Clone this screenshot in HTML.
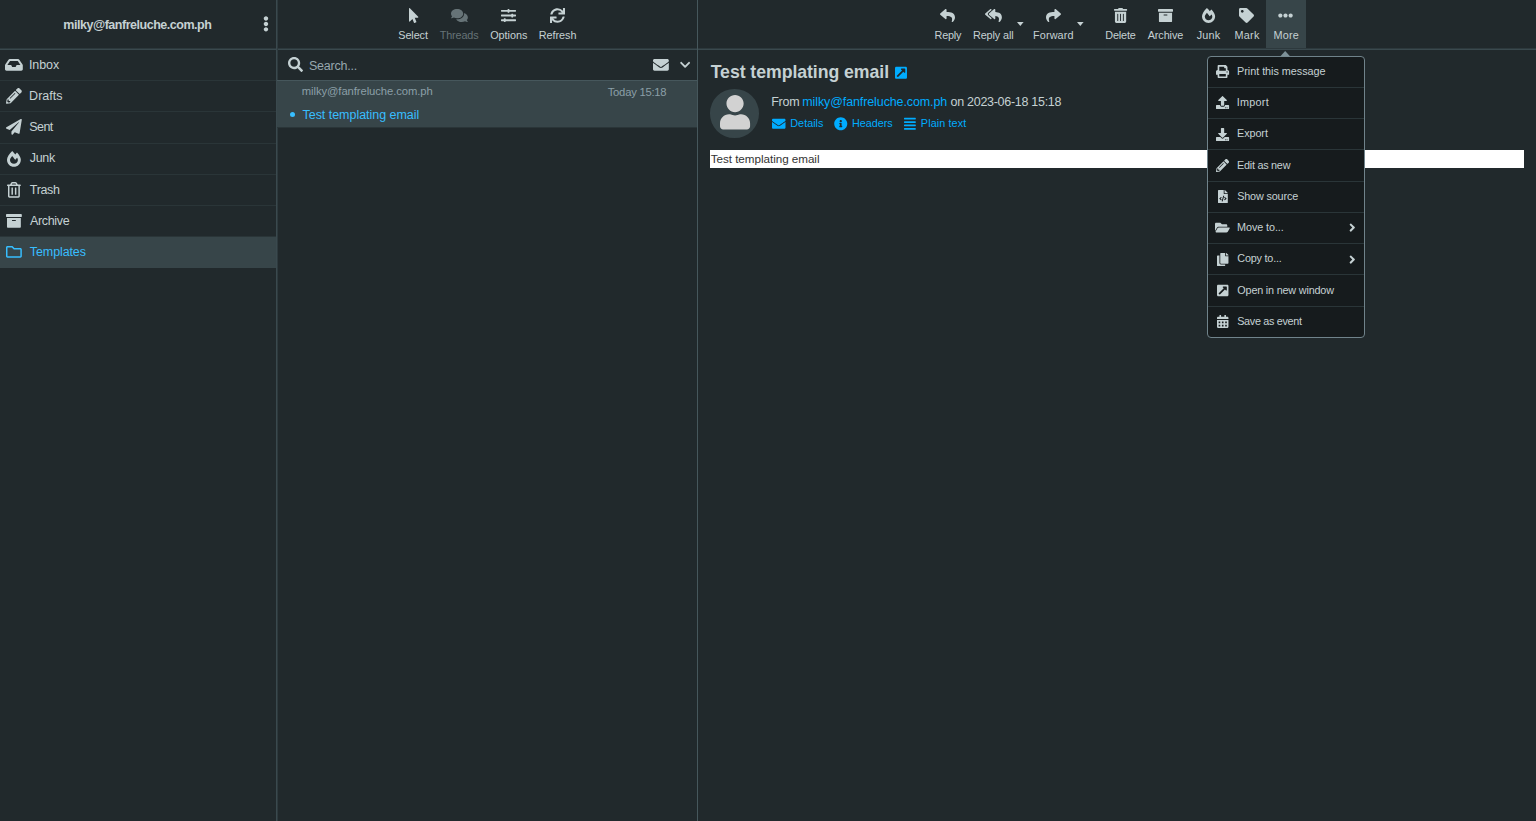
<!DOCTYPE html>
<html lang="en"><head><meta charset="utf-8"><title>Roundcube Webmail :: Test templating email</title>
<style>
html,body{margin:0;padding:0}
body{width:1536px;height:821px;overflow:hidden;position:relative;background:#21292c;color:#c5d1d3;font-family:"Liberation Sans",sans-serif}
.t{position:absolute;white-space:nowrap;line-height:1}
.i{position:absolute;display:block;overflow:visible}
.b{position:absolute}
</style></head><body>

<div class="b" style="left:0;top:237.22px;width:276px;height:31.27px;background:#374549"></div>
<div class="b" style="left:0;top:79.97px;width:276px;height:1px;background:#2a3538"></div>
<div class="b" style="left:0;top:111.24px;width:276px;height:1px;background:#2a3538"></div>
<div class="b" style="left:0;top:142.51px;width:276px;height:1px;background:#2a3538"></div>
<div class="b" style="left:0;top:173.78px;width:276px;height:1px;background:#2a3538"></div>
<div class="b" style="left:0;top:205.05px;width:276px;height:1px;background:#2a3538"></div>
<div class="b" style="left:0;top:236.32px;width:276px;height:1px;background:#2a3538"></div>
<div class="b" style="left:0;top:48px;width:1536px;height:1px;background:#2d393d"></div>
<div class="b" style="left:0;top:49px;width:1536px;height:1px;background:#3a494e"></div>
<div class="b" style="left:276px;top:0;width:1px;height:821px;background:#3a494e"></div>
<div class="b" style="left:277px;top:0;width:1px;height:821px;background:#2e3a3e"></div>
<div class="b" style="left:697px;top:0;width:1px;height:821px;background:#46575c"></div>
<div class="b" style="left:277px;top:80px;width:420px;height:1px;background:#46575c"></div>
<div class="b" style="left:277px;top:81px;width:420px;height:46px;background:#374549"></div>
<div class="b" style="left:277px;top:127px;width:420px;height:1px;background:#2a3538"></div>
<div class="b" style="left:1266px;top:0;width:40px;height:48px;background:#374549"></div>
<div class="b" style="left:710px;top:150px;width:814px;height:18px;background:#fff"></div>
<div class="b" style="left:710.1px;top:89.4px;width:48.6px;height:48.6px;border-radius:50%;background:#374549"></div>
<svg class="i" style="left:720.15px;top:95.20px;" width="30.10" height="34.40" viewBox="0 0 448 512"><path fill="#d2d2d2" d="M224 256c70.700 0 128-57.300 128-128S294.700 0 224 0 96 57.300 96 128s57.300 128 128 128zm89.600 32h-16.700c-22.200 10.200-46.900 16-72.900 16s-50.600-5.800-72.900-16h-16.700C60.200 288 0 348.200 0 422.400V464c0 26.500 21.500 48 48 48h352c26.500 0 48-21.500 48-48v-41.600c0-74.200-60.200-134.400-134.400-134.400z"/></svg>
<svg class="i" style="left:5.35px;top:56.68px;" width="17.81" height="15.83" viewBox="0 0 576 512"><path fill="#c5d1d3" d="M567.938 243.908L462.25 85.374A48.003 48.003 0 0 0 422.311 64H153.689a48 48 0 0 0-39.938 21.374L8.062 243.908A47.994 47.994 0 0 0 0 270.533V400c0 26.51 21.49 48 48 48h480c26.51 0 48-21.49 48-48V270.533a47.994 47.994 0 0 0-8.062-26.625zM162.252 128h251.497l85.333 128H376l-32 64H232l-32-64H76.918l85.334-128z"/></svg>
<svg class="i" style="left:6.33px;top:87.95px;" width="15.83" height="15.83" viewBox="0 0 512 512"><path fill="#c5d1d3" d="M497.9 142.1l-46.1 46.1c-4.7 4.7-12.3 4.7-17 0l-111-111c-4.7-4.7-4.7-12.3 0-17l46.1-46.1c18.7-18.7 49.1-18.7 67.9 0l60.1 60.1c18.8 18.7 18.8 49.1 0 67.9zM284.2 99.8L21.6 362.4.4 483.9c-2.9 16.4 11.4 30.6 27.8 27.8l121.5-21.3 262.6-262.6c4.7-4.7 4.7-12.3 0-17l-111-111c-4.8-4.7-12.4-4.7-17.1 0zM124.1 339.9c-5.5-5.5-5.5-14.3 0-19.8l154-154c5.5-5.5 14.3-5.5 19.8 0s5.5 14.3 0 19.8l-154 154c-5.5 5.5-14.3 5.5-19.8 0zM88 424h48v36.3l-64.5 11.3-31.1-31.1L51.7 376H88v48z"/></svg>
<svg class="i" style="left:6.33px;top:119.22px;" width="15.83" height="15.83" viewBox="0 0 512 512"><path fill="#c5d1d3" d="M476 3.2L12.5 270.6c-18.1 10.4-15.8 35.6 2.2 43.2L121 358.4l287.3-253.2c5.5-4.9 13.3 2.6 8.6 8.3L176 407v80.5c0 23.6 28.5 32.9 42.5 15.8L282 426l124.6 52.2c14.2 6 30.4-2.9 33-18.2l72-432C515 7.8 493.3-6.8 476 3.2z"/></svg>
<svg class="i" style="left:7.32px;top:150.50px;" width="13.85" height="15.83" viewBox="0 0 448 512"><path fill="#c5d1d3" d="M323.56 51.2c-20.8 19.3-39.58 39.59-56.22 59.97C240.08 73.62 206.28 35.53 168 0 69.74 91.17 0 209.96 0 281.6 0 408.85 100.29 512 224 512s224-103.15 224-230.4c0-53.27-51.98-163.14-124.44-230.4zm-19.47 340.65C282.43 407.01 255.72 416 226.86 416 154.71 416 96 368.26 96 290.75c0-38.61 24.31-72.63 72.79-130.75 6.93 7.98 98.83 125.34 98.83 125.34l58.63-66.88c4.14 6.85 7.91 13.55 11.27 19.97 27.35 52.19 15.81 118.97-33.43 153.42z"/></svg>
<svg class="i" style="left:7.32px;top:181.77px;" width="13.85" height="15.83" viewBox="0 0 448 512"><path fill="#c5d1d3" d="M268 416h24a12 12 0 0 0 12-12V188a12 12 0 0 0-12-12h-24a12 12 0 0 0-12 12v216a12 12 0 0 0 12 12zM432 80h-82.41l-34-56.7A48 48 0 0 0 274.41 0H173.59a48 48 0 0 0-41.16 23.3L98.41 80H16A16 16 0 0 0 0 96v16a16 16 0 0 0 16 16h16v336a48 48 0 0 0 48 48h288a48 48 0 0 0 48-48V128h16a16 16 0 0 0 16-16V96a16 16 0 0 0-16-16zM171.84 50.91A6 6 0 0 1 177 48h94a6 6 0 0 1 5.15 2.91L293.61 80H154.39zM368 464H80V128h288zm-212-48h24a12 12 0 0 0 12-12V188a12 12 0 0 0-12-12h-24a12 12 0 0 0-12 12v216a12 12 0 0 0 12 12z"/></svg>
<svg class="i" style="left:6.33px;top:213.03px;" width="15.83" height="15.83" viewBox="0 0 512 512"><path fill="#c5d1d3" d="M32 448c0 17.7 14.3 32 32 32h384c17.7 0 32-14.3 32-32V160H32v288zm160-212c0-6.6 5.4-12 12-12h104c6.600 0 12 5.400 12 12v8c0 6.600-5.400 12-12 12H204c-6.600 0-12-5.400-12-12v-8zM480 32H32C14.300 32 0 46.300 0 64v48c0 8.800 7.200 16 16 16h480c8.800 0 16-7.200 16-16V64c0-17.700-14.300-32-32-32z"/></svg>
<svg class="i" style="left:6.33px;top:244.31px;" width="15.83" height="15.83" viewBox="0 0 512 512"><path fill="#37beff" d="M464 128H272l-54.630-54.630c-6-6-14.140-9.370-22.630-9.370H48C21.490 64 0 85.490 0 112v288c0 26.510 21.490 48 48 48h416c26.510 0 48-21.490 48-48V176c0-26.510-21.490-48-48-48zm0 272H48V112h140.120l54.630 54.630c6 6 14.140 9.370 22.630 9.370H464v224z"/></svg>
<svg class="i" style="left:263.33px;top:15.89px;" width="5.94" height="15.83" viewBox="0 0 192 512"><path fill="#c5d1d3" d="M96 184c39.800 0 72 32.200 72 72s-32.200 72-72 72-72-32.200-72-72 32.200-72 72-72zM24 80c0 39.800 32.200 72 72 72s72-32.200 72-72S135.800 8 96 8 24 40.200 24 80zm0 352c0 39.800 32.200 72 72 72s72-32.200 72-72-32.200-72-72-72-72 32.200-72 72z"/></svg>
<svg class="i" style="left:408.61px;top:7.70px;" width="9.38" height="15.00" viewBox="0 0 320 512"><path fill="#c5d1d3" d="M302.189 329.126H196.105l55.831 135.993c3.889 9.428-.555 19.999-9.444 23.999l-49.165 21.427c-9.165 4-19.443-.571-23.332-9.714l-53.053-129.136-86.664 89.138C18.729 472.71 0 463.554 0 447.977V18.299C0 1.899 19.921-6.096 30.277 5.443l284.412 292.542c11.472 11.179 3.007 31.141-12.5 31.141z"/></svg>
<svg class="i" style="left:450.86px;top:7.70px;" width="16.88" height="15.00" viewBox="0 0 576 512"><path fill="#667377" d="M416 192c0-88.400-93.100-160-208-160S0 103.600 0 192c0 34.300 14.100 65.900 38 92-13.400 30.200-35.500 54.200-35.800 54.500-2.200 2.300-2.800 5.700-1.500 8.700S4.800 352 8 352c36.600 0 66.900-12.300 88.700-25 32.200 15.700 70.300 25 111.300 25 114.900 0 208-71.600 208-160zm122 220c23.900-26 38-57.700 38-92 0-66.900-53.500-124.200-129.300-148.100.9 6.600 1.300 13.300 1.300 20.100 0 105.900-107.700 192-240 192-10.800 0-21.300-.8-31.700-1.900C207.800 439.600 281.800 480 368 480c41 0 79.100-9.200 111.300-25 21.800 12.700 52.100 25 88.700 25 3.200 0 6.100-1.900 7.300-4.800 1.300-2.900.7-6.300-1.500-8.700-.3-.3-22.400-24.200-35.800-54.500z"/></svg>
<svg class="i" style="left:501.45px;top:7.70px;" width="15.00" height="15.00" viewBox="0 0 512 512"><path fill="#c5d1d3" d="M496 384H160v-16c0-8.800-7.200-16-16-16h-32c-8.800 0-16 7.200-16 16v16H16c-8.800 0-16 7.200-16 16v32c0 8.800 7.200 16 16 16h80v16c0 8.800 7.200 16 16 16h32c8.800 0 16-7.200 16-16v-16h336c8.800 0 16-7.200 16-16v-32c0-8.800-7.200-16-16-16zm0-160h-80v-16c0-8.800-7.200-16-16-16h-32c-8.800 0-16 7.200-16 16v16H16c-8.800 0-16 7.200-16 16v32c0 8.800 7.200 16 16 16h336v16c0 8.800 7.200 16 16 16h32c8.800 0 16-7.200 16-16v-16h80c8.800 0 16-7.200 16-16v-32c0-8.800-7.200-16-16-16zm0-160H288V48c0-8.800-7.200-16-16-16h-32c-8.800 0-16 7.200-16 16v16H16C7.200 64 0 71.200 0 80v32c0 8.800 7.200 16 16 16h208v16c0 8.800 7.200 16 16 16h32c8.800 0 16-7.200 16-16v-16h208c8.800 0 16-7.200 16-16V80c0-8.800-7.200-16-16-16z"/></svg>
<svg class="i" style="left:550.15px;top:7.70px;" width="15.00" height="15.00" viewBox="0 0 512 512"><path fill="#c5d1d3" d="M440.65 12.57l4 82.77A247.16 247.16 0 0 0 255.83 8C134.73 8 33.91 94.92 12.29 209.82A12 12 0 0 0 24.09 224h49.05a12 12 0 0 0 11.67-9.26 175.91 175.91 0 0 1 317-56.94l-101.46-4.86a12 12 0 0 0-12.57 12v47.41a12 12 0 0 0 12 12H500a12 12 0 0 0 12-12V12a12 12 0 0 0-12-12h-47.37a12 12 0 0 0-11.98 12.57zM255.83 432a175.61 175.61 0 0 1-146-77.8l101.8 4.870a12 12 0 0 0 12.570-12v-47.400a12 12 0 0 0-12-12H12a12 12 0 0 0-12 12V500a12 12 0 0 0 12 12h47.350a12 12 0 0 0 12-12.600l-4.150-82.570A247.170 247.170 0 0 0 255.830 504c121.110 0 221.930-86.920 243.550-201.820a12 12 0 0 0-11.800-14.180h-49.050a12 12 0 0 0-11.670 9.260A175.860 175.860 0 0 1 255.830 432z"/></svg>
<svg class="i" style="left:287.75px;top:56.95px;" width="15.00" height="15.00" viewBox="0 0 512 512"><path fill="#c5d1d3" d="M505 442.7L405.3 343c-4.5-4.5-10.6-7-17-7H372c27.600-35.300 44-79.700 44-128C416 93.100 322.900 0 208 0S0 93.100 0 208s93.100 208 208 208c48.300 0 92.700-16.400 128-44v16.300c0 6.400 2.500 12.500 7 17l99.700 99.700c9.400 9.400 24.600 9.400 33.900 0l28.300-28.300c9.400-9.400 9.400-24.600.1-34zM208 336c-70.700 0-128-57.200-128-128 0-70.700 57.200-128 128-128 70.700 0 128 57.200 128 128 0 70.700-57.200 128-128 128z"/></svg>
<svg class="i" style="left:652.88px;top:56.68px;" width="15.83" height="15.83" viewBox="0 0 512 512"><path fill="#c5d1d3" d="M502.3 190.8c3.900-3.100 9.700-.2 9.700 4.700V400c0 26.500-21.500 48-48 48H48c-26.500 0-48-21.500-48-48V195.600c0-5 5.700-7.800 9.700-4.700 22.400 17.400 52.100 39.500 154.100 113.600 21.100 15.400 56.700 47.800 92.200 47.600 35.700.3 72-32.800 92.300-47.600 102-74.100 131.600-96.300 154-113.700zM256 320c23.200.4 56.600-29.200 73.400-41.400 132.700-96.300 142.800-104.700 173.400-128.700 5.800-4.500 9.200-11.500 9.200-18.900v-19c0-26.500-21.500-48-48-48H48C21.500 64 0 85.500 0 112v19c0 7.400 3.400 14.300 9.200 18.900 30.600 23.900 40.700 32.400 173.400 128.700 16.800 12.200 50.200 41.800 73.400 41.400z"/></svg>
<svg class="i" style="left:679.88px;top:58.75px;" width="10.24" height="11.70" viewBox="0 0 448 512"><path fill="#c5d1d3" d="M207.029 381.476L12.686 187.132c-9.373-9.373-9.373-24.569 0-33.941l22.667-22.667c9.357-9.357 24.522-9.375 33.901-.04L224 284.505l154.745-154.021c9.379-9.335 24.544-9.317 33.901.04l22.667 22.667c9.373 9.373 9.373 24.569 0 33.941L240.971 381.476c-9.373 9.372-24.569 9.372-33.942 0z"/></svg>
<div class="b" style="left:289.6px;top:112.1px;width:5px;height:5px;border-radius:50%;background:#37beff"></div>
<svg class="i" style="left:940.45px;top:7.70px;" width="15.00" height="15.00" viewBox="0 0 512 512"><path fill="#c5d1d3" d="M8.309 189.836L184.313 37.851C199.719 24.546 224 35.347 224 56.015v80.053c160.629 1.839 288 34.032 288 186.258 0 61.441-39.581 122.309-83.333 154.132-13.653 9.931-33.111-2.533-28.077-18.631 45.344-145.012-21.507-183.51-176.59-185.742V360c0 20.7-24.3 31.453-39.687 18.164l-176.004-152c-11.071-9.562-11.086-26.753 0-36.328z"/></svg>
<svg class="i" style="left:984.76px;top:7.70px;" width="16.88" height="15.00" viewBox="0 0 576 512"><path fill="#c5d1d3" d="M136.309 189.836L312.313 37.851C327.72 24.546 352 35.348 352 56.015v82.763c129.182 10.231 224 52.212 224 183.548 0 61.441-39.582 122.309-83.333 154.132-13.653 9.931-33.111-2.533-28.077-18.631 38.512-123.162-3.922-169.482-112.59-182.015v84.175c0 20.701-24.3 31.453-39.687 18.164L136.309 226.164c-11.071-9.561-11.086-26.753 0-36.328zm-128 36.328L184.313 378.15C199.7 391.439 224 380.687 224 359.986v-15.818l-108.606-93.785A55.96 55.96 0 0 1 96 207.998a55.953 55.953 0 0 1 19.393-42.38L224 71.832V56.015c0-20.667-24.28-31.469-39.687-18.164L8.309 189.836c-11.086 9.575-11.071 26.767 0 36.328z"/></svg>
<svg class="i" style="left:1045.55px;top:7.70px;" width="15.00" height="15.00" viewBox="0 0 512 512"><path fill="#c5d1d3" d="M503.691 189.836L327.687 37.851C312.281 24.546 288 35.347 288 56.015v80.053C127.371 137.907 0 170.1 0 322.326c0 61.441 39.581 122.309 83.333 154.132 13.653 9.931 33.111-2.533 28.077-18.631C66.066 312.814 132.917 274.316 288 272.085V360c0 20.7 24.3 31.453 39.687 18.164l176.004-152c11.071-9.562 11.086-26.753 0-36.328z"/></svg>
<svg class="i" style="left:1114.04px;top:7.70px;" width="13.12" height="15.00" viewBox="0 0 448 512"><path fill="#c5d1d3" d="M32 464a48 48 0 0 0 48 48h288a48 48 0 0 0 48-48V128H32zm272-256a16 16 0 0 1 32 0v224a16 16 0 0 1-32 0zm-96 0a16 16 0 0 1 32 0v224a16 16 0 0 1-32 0zm-96 0a16 16 0 0 1 32 0v224a16 16 0 0 1-32 0zM432 32H312l-9.4-18.7A24 24 0 0 0 281.1 0H166.8a23.72 23.72 0 0 0-21.4 13.3L136 32H16A16 16 0 0 0 0 48v32a16 16 0 0 0 16 16h416a16 16 0 0 0 16-16V48a16 16 0 0 0-16-16z"/></svg>
<svg class="i" style="left:1157.60px;top:7.70px;" width="15.00" height="15.00" viewBox="0 0 512 512"><path fill="#c5d1d3" d="M32 448c0 17.7 14.3 32 32 32h384c17.7 0 32-14.3 32-32V160H32v288zm160-212c0-6.6 5.4-12 12-12h104c6.600 0 12 5.400 12 12v8c0 6.600-5.400 12-12 12H204c-6.600 0-12-5.400-12-12v-8zM480 32H32C14.300 32 0 46.300 0 64v48c0 8.800 7.200 16 16 16h480c8.800 0 16-7.200 16-16V64c0-17.700-14.300-32-32-32z"/></svg>
<svg class="i" style="left:1201.54px;top:7.70px;" width="13.12" height="15.00" viewBox="0 0 448 512"><path fill="#c5d1d3" d="M323.56 51.2c-20.8 19.3-39.58 39.59-56.22 59.97C240.08 73.62 206.28 35.53 168 0 69.74 91.17 0 209.96 0 281.6 0 408.85 100.29 512 224 512s224-103.15 224-230.4c0-53.27-51.98-163.14-124.44-230.4zm-19.47 340.65C282.43 407.01 255.72 416 226.86 416 154.71 416 96 368.26 96 290.75c0-38.61 24.31-72.63 72.79-130.75 6.93 7.98 98.83 125.34 98.83 125.34l58.63-66.88c4.14 6.85 7.91 13.55 11.27 19.97 27.35 52.19 15.81 118.97-33.43 153.42z"/></svg>
<svg class="i" style="left:1239.40px;top:7.70px;" width="15.00" height="15.00" viewBox="0 0 512 512"><path fill="#c5d1d3" d="M0 252.118V48C0 21.49 21.49 0 48 0h204.118a48 48 0 0 1 33.941 14.059l211.882 211.882c18.745 18.745 18.745 49.137 0 67.882L293.823 497.941c-18.745 18.745-49.137 18.745-67.882 0L14.059 286.059A48 48 0 0 1 0 252.118zM112 64c-26.51 0-48 21.49-48 48s21.49 48 48 48 48-21.49 48-48-21.49-48-48-48z"/></svg>
<svg class="i" style="left:1278.40px;top:7.70px;" width="15.00" height="15.00" viewBox="0 0 512 512"><path fill="#c5d1d3" d="M328 256c0 39.800-32.200 72-72 72s-72-32.200-72-72 32.200-72 72-72 72 32.200 72 72zm104-72c-39.800 0-72 32.200-72 72s32.200 72 72 72 72-32.200 72-72-32.200-72-72-72zm-352 0c-39.800 0-72 32.200-72 72s32.200 72 72 72 72-32.200 72-72-32.200-72-72-72z"/></svg>
<svg class="i" style="left:1017.2px;top:22px" width="6.6" height="4" viewBox="0 0 66 40"><path fill="#c5d1d3" d="M0 0H66L33 40z"/></svg>
<svg class="i" style="left:1077.4px;top:22px" width="6.6" height="4" viewBox="0 0 66 40"><path fill="#c5d1d3" d="M0 0H66L33 40z"/></svg>
<svg class="i" style="left:895.21px;top:66.05px;" width="11.99" height="13.70" viewBox="0 0 448 512"><path fill="#00acff" d="M448 80v352c0 26.510-21.490 48-48 48H48c-26.510 0-48-21.490-48-48V80c0-26.510 21.490-48 48-48h352c26.510 0 48 21.490 48 48zm-88 16H248.029c-21.313 0-32.080 25.861-16.971 40.971l31.984 31.987L67.515 364.485c-4.686 4.686-4.686 12.284 0 16.971l31.029 31.029c4.687 4.686 12.285 4.686 16.971 0l195.526-195.526 31.988 31.991C358.058 263.977 384 253.425 384 231.979V120c0-13.255-10.745-24-24-24z"/></svg>
<svg class="i" style="left:772.25px;top:117.45px;" width="13.50" height="13.50" viewBox="0 0 512 512"><path fill="#00acff" d="M502.3 190.8c3.900-3.100 9.700-.2 9.700 4.700V400c0 26.500-21.500 48-48 48H48c-26.500 0-48-21.500-48-48V195.600c0-5 5.700-7.800 9.700-4.700 22.400 17.400 52.100 39.500 154.100 113.600 21.100 15.400 56.700 47.800 92.200 47.600 35.700.3 72-32.800 92.300-47.600 102-74.100 131.600-96.300 154-113.700zM256 320c23.200.4 56.600-29.200 73.400-41.400 132.700-96.300 142.800-104.700 173.400-128.700 5.800-4.500 9.200-11.500 9.200-18.900v-19c0-26.500-21.500-48-48-48H48C21.500 64 0 85.500 0 112v19c0 7.400 3.400 14.300 9.200 18.900 30.600 23.900 40.700 32.400 173.400 128.700 16.800 12.200 50.200 41.800 73.400 41.400z"/></svg>
<svg class="i" style="left:833.90px;top:117.25px;" width="13.50" height="13.50" viewBox="0 0 512 512"><path fill="#00acff" d="M256 8C119.043 8 8 119.083 8 256c0 136.997 111.043 248 248 248s248-111.003 248-248C504 119.083 392.957 8 256 8zm0 110c23.196 0 42 18.804 42 42s-18.804 42-42 42-42-18.804-42-42 18.804-42 42-42zm56 254c0 6.627-5.373 12-12 12h-88c-6.627 0-12-5.373-12-12v-24c0-6.627 5.373-12 12-12h12v-64h-12c-6.627 0-12-5.373-12-12v-24c0-6.627 5.373-12 12-12h64c6.627 0 12 5.373 12 12v100h12c6.627 0 12 5.373 12 12v24z"/></svg>
<svg class="i" style="left:904.19px;top:117.45px;" width="11.81" height="13.50" viewBox="0 0 448 512"><path fill="#00acff" d="M432 416H16a16 16 0 0 0-16 16v32a16 16 0 0 0 16 16h416a16 16 0 0 0 16-16v-32a16 16 0 0 0-16-16zm0-128H16a16 16 0 0 0-16 16v32a16 16 0 0 0 16 16h416a16 16 0 0 0 16-16v-32a16 16 0 0 0-16-16zm0-128H16a16 16 0 0 0-16 16v32a16 16 0 0 0 16 16h416a16 16 0 0 0 16-16v-32a16 16 0 0 0-16-16zm0-128H16A16 16 0 0 0 0 48v32a16 16 0 0 0 16 16h416a16 16 0 0 0 16-16V48a16 16 0 0 0-16-16z"/></svg>
<div class="b" style="left:1207px;top:56px;width:156px;height:280px;background:#161b1d;border:1px solid #70838b;border-radius:4px"></div>
<svg class="i" style="left:1280.4px;top:50.6px" width="10.4" height="5.6" viewBox="0 0 104 58"><path fill="#7d9198" d="M0 58L52 0L104 58z"/></svg>
<div class="b" style="left:1208px;top:86.86px;width:156px;height:1px;background:#2a3538"></div>
<div class="b" style="left:1208px;top:118.12px;width:156px;height:1px;background:#2a3538"></div>
<div class="b" style="left:1208px;top:149.38px;width:156px;height:1px;background:#2a3538"></div>
<div class="b" style="left:1208px;top:180.64px;width:156px;height:1px;background:#2a3538"></div>
<div class="b" style="left:1208px;top:211.90px;width:156px;height:1px;background:#2a3538"></div>
<div class="b" style="left:1208px;top:243.16px;width:156px;height:1px;background:#2a3538"></div>
<div class="b" style="left:1208px;top:274.42px;width:156px;height:1px;background:#2a3538"></div>
<div class="b" style="left:1208px;top:305.68px;width:156px;height:1px;background:#2a3538"></div>
<svg class="i" style="left:1216.25px;top:65.05px;" width="13.10" height="13.10" viewBox="0 0 512 512"><path fill="#c5d1d3" d="M448 192V77.250c0-8.490-3.370-16.620-9.370-22.630L393.370 9.370c-6-6-14.140-9.370-22.630-9.370H96C78.330 0 64 14.330 64 32v160c-35.350 0-64 28.650-64 64v112c0 8.840 7.160 16 16 16h48v96c0 17.670 14.330 32 32 32h320c17.670 0 32-14.330 32-32v-96h48c8.840 0 16-7.160 16-16V256c0-35.350-28.650-64-64-64zm-64 256H128v-96h256v96zm0-224H128V64h192v48c0 8.840 7.160 16 16 16h48v96zm48 72c-13.250 0-24-10.750-24-24 0-13.260 10.750-24 24-24s24 10.740 24 24c0 13.250-10.750 24-24 24z"/></svg>
<svg class="i" style="left:1216.25px;top:96.31px;" width="13.10" height="13.10" viewBox="0 0 512 512"><path fill="#c5d1d3" d="M296 384h-80c-13.300 0-24-10.700-24-24V192h-87.700c-17.800 0-26.700-21.500-14.100-34.100L242.300 5.700c7.500-7.500 19.800-7.500 27.300 0l152.200 152.200c12.600 12.600 3.700 34.100-14.100 34.100H320v168c0 13.300-10.700 24-24 24zm216-8v112c0 13.300-10.700 24-24 24H24c-13.300 0-24-10.700-24-24V376c0-13.300 10.700-24 24-24h136v8c0 30.900 25.100 56 56 56h80c30.900 0 56-25.100 56-56v-8h136c13.300 0 24 10.700 24 24zm-124 88c0-11-9-20-20-20s-20 9-20 20 9 20 20 20 20-9 20-20zm64 0c0-11-9-20-20-20s-20 9-20 20 9 20 20 20 20-9 20-20z"/></svg>
<svg class="i" style="left:1216.25px;top:127.57px;" width="13.10" height="13.10" viewBox="0 0 512 512"><path fill="#c5d1d3" d="M216 0h80c13.300 0 24 10.700 24 24v168h87.700c17.800 0 26.700 21.500 14.100 34.100L269.700 378.300c-7.500 7.500-19.800 7.500-27.300 0L90.100 226.100c-12.600-12.600-3.700-34.100 14.100-34.100H192V24c0-13.300 10.700-24 24-24zm296 376v112c0 13.300-10.700 24-24 24H24c-13.300 0-24-10.700-24-24V376c0-13.300 10.700-24 24-24h146.700l49 49c20.100 20.100 52.500 20.100 72.600 0l49-49H488c13.300 0 24 10.700 24 24zm-124 88c0-11-9-20-20-20s-20 9-20 20 9 20 20 20 20-9 20-20zm64 0c0-11-9-20-20-20s-20 9-20 20 9 20 20 20 20-9 20-20z"/></svg>
<svg class="i" style="left:1216.25px;top:158.83px;" width="13.10" height="13.10" viewBox="0 0 512 512"><path fill="#c5d1d3" d="M497.9 142.1l-46.1 46.1c-4.7 4.7-12.3 4.7-17 0l-111-111c-4.7-4.7-4.7-12.3 0-17l46.1-46.1c18.7-18.7 49.1-18.7 67.9 0l60.1 60.1c18.8 18.7 18.8 49.1 0 67.9zM284.2 99.8L21.6 362.4.4 483.9c-2.9 16.4 11.4 30.6 27.8 27.8l121.5-21.3 262.6-262.6c4.7-4.7 4.7-12.3 0-17l-111-111c-4.8-4.7-12.4-4.7-17.1 0zM124.1 339.9c-5.5-5.5-5.5-14.3 0-19.8l154-154c5.5-5.5 14.3-5.5 19.8 0s5.5 14.3 0 19.8l-154 154c-5.5 5.5-14.3 5.5-19.8 0zM88 424h48v36.3l-64.5 11.3-31.1-31.1L51.7 376H88v48z"/></svg>
<svg class="i" style="left:1217.89px;top:190.09px;" width="9.82" height="13.10" viewBox="0 0 384 512"><path fill="#c5d1d3" d="M384 121.941V128H256V0h6.059c6.365 0 12.47 2.529 16.971 7.029l97.941 97.941A24.005 24.005 0 0 1 384 121.941zM248 160c-13.2 0-24-10.800-24-24V0H24C10.745 0 0 10.745 0 24v464c0 13.255 10.745 24 24 24h336c13.255 0 24-10.745 24-24V160H248zM123.206 400.505a5.400 5.400 0 0 1-7.633.246l-64.866-60.812a5.400 5.400 0 0 1 0-7.879l64.866-60.812a5.400 5.400 0 0 1 7.633.246l19.579 20.885a5.400 5.400 0 0 1-.372 7.747L101.650 336l40.763 35.874a5.400 5.400 0 0 1 .372 7.747l-19.579 20.884zm51.295 50.479l-27.453-7.970a5.402 5.402 0 0 1-3.681-6.692l61.440-211.626a5.402 5.402 0 0 1 6.692-3.681l27.452 7.970a5.400 5.400 0 0 1 3.680 6.692l-61.440 211.626a5.397 5.397 0 0 1-6.690 3.681zm160.792-111.045l-64.866 60.812a5.400 5.400 0 0 1-7.633-.246l-19.580-20.885a5.400 5.400 0 0 1 .372-7.747L284.350 336l-40.763-35.874a5.400 5.400 0 0 1-.372-7.747l19.580-20.885a5.400 5.400 0 0 1 7.633-.246l64.866 60.812a5.400 5.400 0 0 1-.001 7.879z"/></svg>
<svg class="i" style="left:1215.43px;top:221.35px;" width="14.74" height="13.10" viewBox="0 0 576 512"><path fill="#c5d1d3" d="M572.694 292.093L500.27 416.248A63.997 63.997 0 0 1 444.989 448H45.025c-18.523 0-30.064-20.093-20.731-36.093l72.424-124.155A64 64 0 0 1 152 256h399.964c18.523 0 30.064 20.093 20.73 36.093zM152 224h328v-48c0-26.510-21.490-48-48-48H272l-64-64H48C21.490 64 0 85.490 0 112v278.046l69.077-118.418C86.214 242.250 117.989 224 152 224z"/></svg>
<svg class="i" style="left:1217.07px;top:252.61px;" width="11.46" height="13.10" viewBox="0 0 448 512"><path fill="#c5d1d3" d="M320 448v40c0 13.255-10.745 24-24 24H24c-13.255 0-24-10.745-24-24V120c0-13.255 10.745-24 24-24h72v296c0 30.879 25.121 56 56 56h168zm0-344V0H152c-13.255 0-24 10.745-24 24v368c0 13.255 10.745 24 24 24h272c13.255 0 24-10.745 24-24V128H344c-13.200 0-24-10.800-24-24zm120.971-31.029L375.029 7.029A24 24 0 0 0 358.059 0H352v96h96v-6.059a24 24 0 0 0-7.029-16.970z"/></svg>
<svg class="i" style="left:1217.07px;top:283.87px;" width="11.46" height="13.10" viewBox="0 0 448 512"><path fill="#c5d1d3" d="M448 80v352c0 26.510-21.490 48-48 48H48c-26.510 0-48-21.490-48-48V80c0-26.510 21.490-48 48-48h352c26.510 0 48 21.490 48 48zm-88 16H248.029c-21.313 0-32.080 25.861-16.971 40.971l31.984 31.987L67.515 364.485c-4.686 4.686-4.686 12.284 0 16.971l31.029 31.029c4.687 4.686 12.285 4.686 16.971 0l195.526-195.526 31.988 31.991C358.058 263.977 384 253.425 384 231.979V120c0-13.255-10.745-24-24-24z"/></svg>
<svg class="i" style="left:1217.07px;top:315.13px;" width="11.46" height="13.10" viewBox="0 0 448 512"><path fill="#c5d1d3" d="M0 464c0 26.500 21.500 48 48 48h352c26.500 0 48-21.500 48-48V192H0v272zm320-196c0-6.600 5.400-12 12-12h40c6.600 0 12 5.400 12 12v40c0 6.600-5.400 12-12 12h-40c-6.600 0-12-5.400-12-12v-40zm0 128c0-6.600 5.400-12 12-12h40c6.600 0 12 5.400 12 12v40c0 6.600-5.400 12-12 12h-40c-6.600 0-12-5.400-12-12v-40zM192 268c0-6.600 5.400-12 12-12h40c6.600 0 12 5.400 12 12v40c0 6.600-5.400 12-12 12h-40c-6.600 0-12-5.400-12-12v-40zm0 128c0-6.600 5.400-12 12-12h40c6.600 0 12 5.400 12 12v40c0 6.600-5.400 12-12 12h-40c-6.600 0-12-5.400-12-12v-40zM64 268c0-6.600 5.400-12 12-12h40c6.600 0 12 5.400 12 12v40c0 6.600-5.400 12-12 12H76c-6.600 0-12-5.400-12-12v-40zm0 128c0-6.600 5.400-12 12-12h40c6.600 0 12 5.400 12 12v40c0 6.600-5.400 12-12 12H76c-6.600 0-12-5.400-12-12v-40zM400 64h-48V16c0-8.800-7.200-16-16-16h-32c-8.800 0-16 7.200-16 16v48H160V16c0-8.800-7.200-16-16-16h-32c-8.800 0-16 7.200-16 16v48H48C21.500 64 0 85.500 0 112v48h448v-48c0-26.500-21.500-48-48-48z"/></svg>
<svg class="i" style="left:1348.82px;top:221.25px;" width="6.55" height="13.10" viewBox="0 0 256 512"><path fill="#c5d1d3" d="M224.3 273l-136 136c-9.400 9.400-24.600 9.400-33.900 0l-22.600-22.600c-9.400-9.400-9.400-24.600 0-33.900l96.400-96.400-96.400-96.400c-9.400-9.400-9.400-24.600 0-33.900L54.300 103c9.400-9.400 24.600-9.400 33.900 0l136 136c9.500 9.400 9.500 24.600.1 34z"/></svg>
<svg class="i" style="left:1348.82px;top:252.51px;" width="6.55" height="13.10" viewBox="0 0 256 512"><path fill="#c5d1d3" d="M224.3 273l-136 136c-9.400 9.400-24.600 9.400-33.900 0l-22.600-22.600c-9.400-9.400-9.400-24.600 0-33.900l96.400-96.400-96.400-96.400c-9.400-9.400-9.400-24.600 0-33.900L54.300 103c9.400-9.400 24.600-9.400 33.900 0l136 136c9.500 9.400 9.500 24.600.1 34z"/></svg>
<span class="t" style="left:63.34px;top:19.20px;font-size:12.5px;font-weight:700;color:#c5d1d3;letter-spacing:-0.472px;">milky@fanfreluche.com.ph</span>
<span class="t" style="left:28.96px;top:58.60px;font-size:12.5px;font-weight:400;color:#c5d1d3;letter-spacing:-0.097px;">Inbox</span>
<span class="t" style="left:29.08px;top:89.87px;font-size:12.5px;font-weight:400;color:#c5d1d3;letter-spacing:0.026px;">Drafts</span>
<span class="t" style="left:29.30px;top:121.14px;font-size:12.5px;font-weight:400;color:#c5d1d3;letter-spacing:-0.571px;">Sent</span>
<span class="t" style="left:29.78px;top:152.41px;font-size:12.5px;font-weight:400;color:#c5d1d3;letter-spacing:-0.298px;">Junk</span>
<span class="t" style="left:29.85px;top:183.68px;font-size:12.5px;font-weight:400;color:#c5d1d3;letter-spacing:-0.343px;">Trash</span>
<span class="t" style="left:29.94px;top:214.95px;font-size:12.5px;font-weight:400;color:#c5d1d3;letter-spacing:-0.333px;">Archive</span>
<span class="t" style="left:29.85px;top:246.22px;font-size:12.5px;font-weight:400;color:#37beff;letter-spacing:-0.110px;">Templates</span>
<span class="t" style="left:398.26px;top:29.70px;font-size:10.83px;font-weight:400;color:#c5d1d3;letter-spacing:-0.077px;">Select</span>
<span class="t" style="left:439.68px;top:29.70px;font-size:10.83px;font-weight:400;color:#667377;letter-spacing:-0.127px;">Threads</span>
<span class="t" style="left:490.19px;top:29.70px;font-size:10.83px;font-weight:400;color:#c5d1d3;letter-spacing:-0.033px;">Options</span>
<span class="t" style="left:538.82px;top:29.70px;font-size:10.83px;font-weight:400;color:#c5d1d3;letter-spacing:-0.054px;">Refresh</span>
<span class="t" style="left:308.91px;top:59.50px;font-size:12.5px;font-weight:400;color:#97a7ad;letter-spacing:-0.216px;">Search...</span>
<span class="t" style="left:301.78px;top:86.30px;font-size:11.25px;font-weight:400;color:#8b9fa7;letter-spacing:-0.079px;">milky@fanfreluche.com.ph</span>
<span class="t" style="left:607.72px;top:86.80px;font-size:11.25px;font-weight:400;color:#8b9fa7;letter-spacing:-0.243px;">Today 15:18</span>
<span class="t" style="left:302.51px;top:108.50px;font-size:12.5px;font-weight:400;color:#37beff;letter-spacing:-0.033px;">Test templating email</span>
<span class="t" style="left:934.52px;top:29.70px;font-size:10.83px;font-weight:400;color:#c5d1d3;letter-spacing:-0.204px;">Reply</span>
<span class="t" style="left:972.94px;top:29.70px;font-size:10.83px;font-weight:400;color:#c5d1d3;letter-spacing:-0.097px;">Reply all</span>
<span class="t" style="left:1033.12px;top:29.70px;font-size:10.83px;font-weight:400;color:#c5d1d3;letter-spacing:0.104px;">Forward</span>
<span class="t" style="left:1105.26px;top:29.70px;font-size:10.83px;font-weight:400;color:#c5d1d3;letter-spacing:-0.135px;">Delete</span>
<span class="t" style="left:1147.72px;top:29.70px;font-size:10.83px;font-weight:400;color:#c5d1d3;letter-spacing:-0.093px;">Archive</span>
<span class="t" style="left:1196.67px;top:29.70px;font-size:10.83px;font-weight:400;color:#c5d1d3;letter-spacing:0.217px;">Junk</span>
<span class="t" style="left:1234.49px;top:29.70px;font-size:10.83px;font-weight:400;color:#c5d1d3;letter-spacing:0.291px;">Mark</span>
<span class="t" style="left:1273.46px;top:29.70px;font-size:10.83px;font-weight:400;color:#c5d1d3;letter-spacing:0.216px;">More</span>
<span class="t" style="left:710.68px;top:64.20px;font-size:17.7px;font-weight:700;color:#c5d1d3;letter-spacing:-0.058px;">Test templating email</span>
<span class="t" style="left:771.18px;top:95.70px;font-size:12.5px;font-weight:400;color:#c5d1d3;letter-spacing:-0.260px;">From</span>
<span class="t" style="left:802.29px;top:95.70px;font-size:12.5px;font-weight:400;color:#00acff;letter-spacing:-0.107px;">milky@fanfreluche.com.ph</span>
<span class="t" style="left:950.59px;top:95.70px;font-size:12.5px;font-weight:400;color:#c5d1d3;letter-spacing:-0.289px;">on 2023-06-18 15:18</span>
<span class="t" style="left:790.30px;top:117.50px;font-size:10.83px;font-weight:400;color:#00acff;letter-spacing:0.007px;">Details</span>
<span class="t" style="left:852.02px;top:117.50px;font-size:10.83px;font-weight:400;color:#00acff;letter-spacing:-0.053px;">Headers</span>
<span class="t" style="left:920.82px;top:117.50px;font-size:10.83px;font-weight:400;color:#00acff;letter-spacing:0.102px;">Plain text</span>
<span class="t" style="left:710.76px;top:152.50px;font-size:11.67px;font-weight:400;color:#333333;letter-spacing:-0.038px;">Test templating email</span>
<span class="t" style="left:1237.02px;top:65.80px;font-size:10.83px;font-weight:400;color:#c5d1d3;letter-spacing:-0.027px;">Print this message</span>
<span class="t" style="left:1236.82px;top:97.06px;font-size:10.83px;font-weight:400;color:#c5d1d3;letter-spacing:0.229px;">Import</span>
<span class="t" style="left:1237.07px;top:128.32px;font-size:10.83px;font-weight:400;color:#c5d1d3;letter-spacing:-0.093px;">Export</span>
<span class="t" style="left:1237.02px;top:159.58px;font-size:10.83px;font-weight:400;color:#c5d1d3;letter-spacing:-0.253px;">Edit as new</span>
<span class="t" style="left:1237.14px;top:190.84px;font-size:10.83px;font-weight:400;color:#c5d1d3;letter-spacing:-0.155px;">Show source</span>
<span class="t" style="left:1237.04px;top:222.10px;font-size:10.83px;font-weight:400;color:#c5d1d3;letter-spacing:-0.092px;">Move to...</span>
<span class="t" style="left:1237.30px;top:253.36px;font-size:10.83px;font-weight:400;color:#c5d1d3;letter-spacing:-0.209px;">Copy to...</span>
<span class="t" style="left:1237.35px;top:284.62px;font-size:10.83px;font-weight:400;color:#c5d1d3;letter-spacing:-0.195px;">Open in new window</span>
<span class="t" style="left:1237.19px;top:315.88px;font-size:10.83px;font-weight:400;color:#c5d1d3;letter-spacing:-0.323px;">Save as event</span>

</body></html>
